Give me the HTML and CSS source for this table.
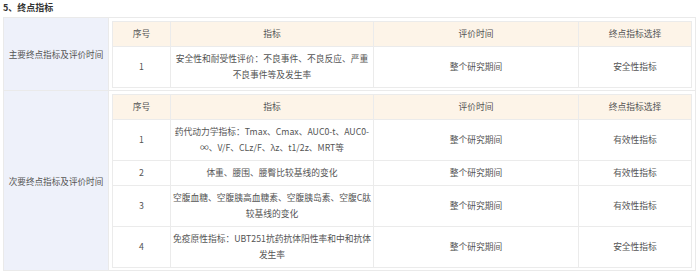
FILE: index.html
```html
<!DOCTYPE html>
<html lang="zh-CN">
<head>
<meta charset="utf-8">
<link rel="stylesheet" href="styles.css">
</head>
<body>
<div class="title">5、终点指标</div>
<table class="outer">
  <tr>
    <td class="label">主要终点指标及评价时间</td>
    <td class="content">
      <table class="inner">
        <colgroup><col class="c1"><col class="c2"><col class="c3"><col class="c4"></colgroup>
        <tr class="head"><th>序号</th><th>指标</th><th>评价时间</th><th>终点指标选择</th></tr>
        <tr><td>1</td><td>安全性和耐受性评价：不良事件、不良反应、严重不良事件等及发生率</td><td>整个研究期间</td><td>安全性指标</td></tr>
      </table>
    </td>
  </tr>
  <tr>
    <td class="label">次要终点指标及评价时间</td>
    <td class="content">
      <table class="inner">
        <colgroup><col class="c1"><col class="c2"><col class="c3"><col class="c4"></colgroup>
        <tr class="head"><th>序号</th><th>指标</th><th>评价时间</th><th>终点指标选择</th></tr>
        <tr><td>1</td><td>药代动力学指标：Tmax、Cmax、AUC0-t、AUC0-∞、V/F、CLz/F、λz、t1/2z、MRT等</td><td>整个研究期间</td><td>有效性指标</td></tr>
        <tr><td>2</td><td>体重、腰围、腰臀比较基线的变化</td><td>整个研究期间</td><td>有效性指标</td></tr>
        <tr><td>3</td><td>空腹血糖、空腹胰高血糖素、空腹胰岛素、空腹C肽较基线的变化</td><td>整个研究期间</td><td>有效性指标</td></tr>
        <tr><td>4</td><td>免疫原性指标：UBT251抗药抗体阳性率和中和抗体发生率</td><td>整个研究期间</td><td>安全性指标</td></tr>
      </table>
    </td>
  </tr>
</table>
</body>
</html>
```
FILE: styles.css
```css
html, body {
  margin: 0;
  background: #ffffff;
}
body {
  padding: 1px 4px 0 3px;
  font-family: "Noto Sans CJK SC", "Noto Sans", sans-serif;
  font-size: 8.75px;
  color: #555555;
}
.title {
  font-weight: bold;
  color: #333333;
  font-size: 9px;
  line-height: 14px;
  margin-bottom: 2px;
}
.outer {
  border-collapse: collapse;
  width: 693px;
}
.outer > tbody > tr > td {
  border: 1px solid #eaeaea;
}
.label {
  width: 104px;
  background: #eef1fa;
  text-align: center;
  vertical-align: middle;
  line-height: 16px;
  padding: 0;
  font-size: 8.6px;
}
.content {
  padding: 3px 3px 2px 3px;
  vertical-align: top;
}
.inner {
  border-collapse: collapse;
  width: 100%;
  table-layout: fixed;
}
.c1 { width: 58px; }
.c2 { width: 203px; }
.c3 { width: 205px; }
.inner th, .inner td {
  border: 1px solid #ebebeb;
  text-align: center;
  vertical-align: middle;
  line-height: 16px;
  padding: 4px 3px;
  font-weight: normal;
}
.inner td:nth-child(2) {
  padding-left: 1px;
  padding-right: 1px;
}
.inner .head th {
  background: #fdf4e8;
}
```
